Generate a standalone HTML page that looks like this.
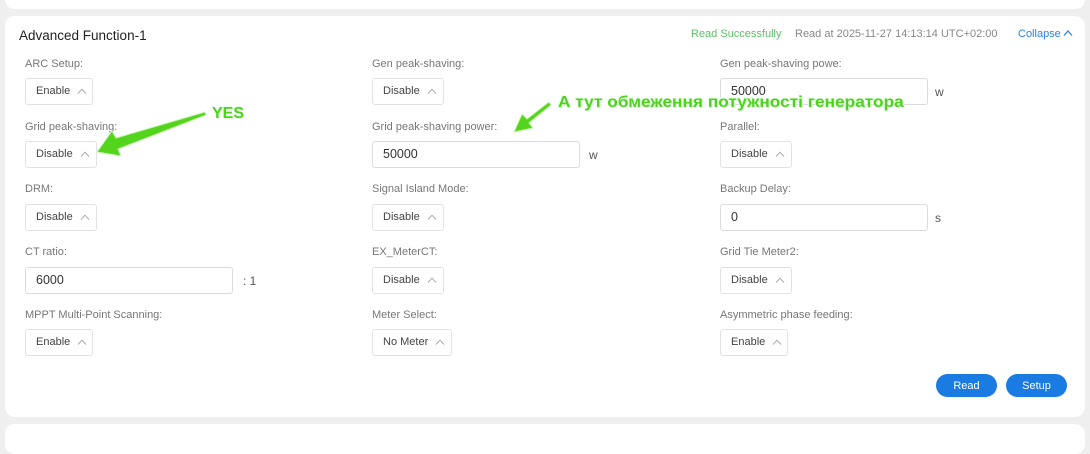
<!DOCTYPE html>
<html><head><meta charset="utf-8"><style>
*{box-sizing:border-box;margin:0;padding:0}
body{width:1090px;height:437px;background:#efefef;font-family:"Liberation Sans",sans-serif;position:relative;overflow:hidden;color:#333}
.card{position:absolute;background:#fff;border-radius:10px}
.t{position:absolute;font-size:11px;color:#777;white-space:nowrap}
.sel{position:absolute;height:27px;border:1px solid #e2e2e2;border-radius:3px;font-size:11px;color:#444;padding:0 0 0 10px;line-height:25px;background:#fff;white-space:nowrap}
.sel svg{margin-left:7px;vertical-align:0}
.inp{position:absolute;height:27px;width:208px;border:1px solid #dcdcdc;border-radius:3px;font-size:12.5px;color:#333;padding-left:10px;line-height:25px;background:#fff}
.u{position:absolute;font-size:12px;color:#555}
.btn{position:absolute;top:374px;height:23px;width:61px;border-radius:12px;background:#1a7be3;color:#fff;font-size:11px;text-align:center;line-height:24px}
.ann{position:absolute;font-weight:bold;color:#4fd11e;font-size:16px;text-shadow:0 0 2px #fff,1px 1px 0 #cfc,-1px -1px 0 #dfd;white-space:nowrap;transform-origin:0 0}
</style></head><body>
<div class="card" style="left:5px;top:-10px;width:1080px;height:19px"></div>
<div class="card" style="left:5px;top:16px;width:1080px;height:401px"></div>
<div class="card" style="left:5px;top:424px;width:1080px;height:30px"></div>

<div class="t" style="left:19px;top:28px;font-size:13.5px;color:#222">Advanced Function-1</div>
<div class="t" style="left:691px;top:28px;color:#5cc06a">Read Successfully</div>
<div class="t" style="left:795px;top:28px;color:#888">Read at 2025-11-27 14:13:14 UTC+02:00</div>
<div class="t" style="left:1018px;top:28px;color:#2a84e0">Collapse<svg width="10" height="8" style="margin-left:2px" viewBox="0 0 10 8"><path d="M1 6.5L5 2l4 4.5" fill="none" stroke="#2a84e0" stroke-width="1.3"/></svg></div>

<svg width="0" height="0" style="position:absolute"><defs><symbol id="c" viewBox="0 0 10 6"><path d="M1 5.5L5 1.2l4 4.3" fill="none" stroke="#aaa" stroke-width="1"/></symbol></defs></svg>

<!-- col1 -->
<div class="t" style="left:25px;top:58px">ARC Setup:</div>
<div class="sel" style="left:25px;top:78px;width:68px">Enable<svg width="10" height="6"><use href="#c"/></svg></div>
<div class="t" style="left:25px;top:121px">Grid peak-shaving:</div>
<div class="sel" style="left:25px;top:141px;width:72px">Disable<svg width="10" height="6"><use href="#c"/></svg></div>
<div class="t" style="left:25px;top:183px">DRM:</div>
<div class="sel" style="left:25px;top:204px;width:72px">Disable<svg width="10" height="6"><use href="#c"/></svg></div>
<div class="t" style="left:25px;top:246px">CT ratio:</div>
<div class="inp" style="left:25px;top:267px">6000</div>
<div class="u" style="left:243px;top:274px">: 1</div>
<div class="t" style="left:25px;top:309px">MPPT Multi-Point Scanning:</div>
<div class="sel" style="left:25px;top:329px;width:68px">Enable<svg width="10" height="6"><use href="#c"/></svg></div>

<!-- col2 -->
<div class="t" style="left:372px;top:58px">Gen peak-shaving:</div>
<div class="sel" style="left:372px;top:78px;width:72px">Disable<svg width="10" height="6"><use href="#c"/></svg></div>
<div class="t" style="left:372px;top:121px">Grid peak-shaving power:</div>
<div class="inp" style="left:372px;top:141px">50000</div>
<div class="u" style="left:589px;top:148px">w</div>
<div class="t" style="left:372px;top:183px">Signal Island Mode:</div>
<div class="sel" style="left:372px;top:204px;width:72px">Disable<svg width="10" height="6"><use href="#c"/></svg></div>
<div class="t" style="left:372px;top:246px">EX_MeterCT:</div>
<div class="sel" style="left:372px;top:267px;width:72px">Disable<svg width="10" height="6"><use href="#c"/></svg></div>
<div class="t" style="left:372px;top:309px">Meter Select:</div>
<div class="sel" style="left:372px;top:329px;width:80px">No Meter<svg width="10" height="6"><use href="#c"/></svg></div>

<!-- col3 -->
<div class="t" style="left:720px;top:58px">Gen peak-shaving powe:</div>
<div class="inp" style="left:720px;top:78px">50000</div>
<div class="u" style="left:935px;top:85px">w</div>
<div class="t" style="left:720px;top:121px">Parallel:</div>
<div class="sel" style="left:720px;top:141px;width:72px">Disable<svg width="10" height="6"><use href="#c"/></svg></div>
<div class="t" style="left:720px;top:183px">Backup Delay:</div>
<div class="inp" style="left:720px;top:204px">0</div>
<div class="u" style="left:935px;top:211px">s</div>
<div class="t" style="left:720px;top:246px">Grid Tie Meter2:</div>
<div class="sel" style="left:720px;top:267px;width:72px">Disable<svg width="10" height="6"><use href="#c"/></svg></div>
<div class="t" style="left:720px;top:309px">Asymmetric phase feeding:</div>
<div class="sel" style="left:720px;top:329px;width:68px">Enable<svg width="10" height="6"><use href="#c"/></svg></div>

<div class="btn" style="left:936px">Read</div>
<div class="btn" style="left:1006px">Setup</div>

<svg style="position:absolute;left:0;top:0" width="1090" height="437">
<path d="M205 112 L116 138 L112 131 L97 152 L121 156 L118 149 L206 115 Z" fill="#55d41e" stroke="#c8f5b0" stroke-width="1"/>
<path d="M549 102 L527 119 L522 114 L514 132 L533 128 L529 123 L551 105 Z" fill="#55d41e" stroke="#c8f5b0" stroke-width="1"/>
</svg>
<div class="ann" style="left:212px;top:105px">YES</div>
<div class="ann" style="left:558px;top:94px;transform:scaleX(1.08)">А тут обмеження потужності генератора</div>
</body></html>
